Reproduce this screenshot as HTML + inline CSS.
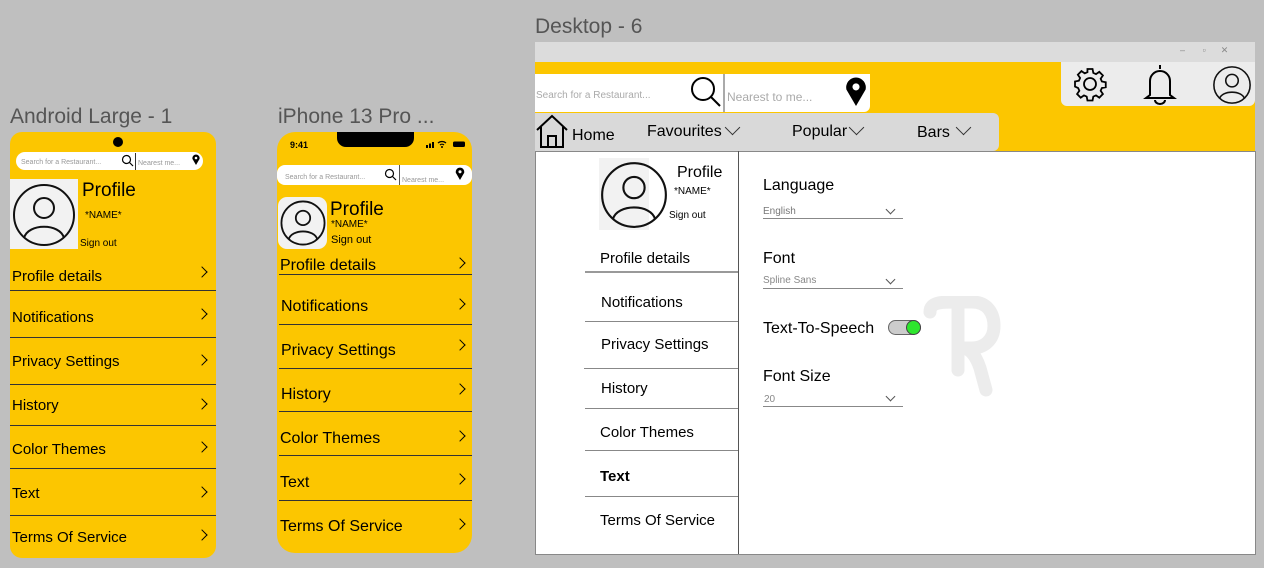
<!DOCTYPE html>
<html><head><meta charset="utf-8"><style>
*{margin:0;padding:0;box-sizing:border-box}
body{width:1264px;height:568px;background:#bfbfbf;position:relative;overflow:hidden;font-family:"Liberation Sans",sans-serif;color:#000}
.a{position:absolute;white-space:nowrap}
.y{background:#fcc600}
.t{color:#555;font-size:21px}
.ln{position:absolute;height:1px;background:#333}
.chev{position:absolute;width:8px;height:8px;border-right:1.3px solid #000;border-top:1.3px solid #000;transform:rotate(45deg)}
.dd{position:absolute;width:7px;height:7px;border-right:1px solid #555;border-bottom:1px solid #555;transform:rotate(45deg)}
.it{position:absolute;font-size:15px;margin-top:2px}
.ph{font-size:8px;color:#999}
</style></head><body>

<div class="a t" style="left:10px;top:105px">Android Large - 1</div>
<div class="a t" style="left:278px;top:105px">iPhone 13 Pro ...</div>
<div class="a t" style="left:535px;top:15px">Desktop - 6</div>

<!-- Android -->
<div class="a y" style="left:10px;top:132px;width:206px;height:426px;border-radius:12px"></div>
<div class="a" style="left:113px;top:137px;width:10px;height:10px;border-radius:50%;background:#000"></div>
<div class="a" style="left:16px;top:152px;width:187px;height:18px;background:#fff;border-radius:9px"></div>
<div class="a ph" style="left:21px;top:159px;font-size:7px">Search for a Restaurant...</div>
<svg class="a" style="left:121px;top:154px" width="13" height="13" viewBox="0 0 13 13"><circle cx="5.5" cy="5.5" r="4" fill="none" stroke="#000" stroke-width="1.2"/><path d="M8.5 8.5L12 12" stroke="#000" stroke-width="1.2"/></svg>
<div class="a" style="left:135px;top:153px;width:1px;height:17px;background:#333"></div>
<div class="a ph" style="left:138px;top:160px;font-size:7px">Nearest me...</div>
<svg class="a" style="left:192px;top:154px" width="8" height="11" viewBox="0 0 8 11"><path d="M4 11L0.5 5A3.6 3.6 0 1 1 7.5 5Z" fill="#000"/><circle cx="4" cy="4" r="1.3" fill="#fff"/></svg>
<div class="a" style="left:10px;top:179px;width:68px;height:70px;background:#f2f2f2"></div>
<svg class="a" style="left:12px;top:183px" width="64" height="64" viewBox="0 0 64 64"><circle cx="32" cy="32" r="30" fill="none" stroke="#111" stroke-width="2"/><circle cx="32" cy="25" r="10" fill="none" stroke="#111" stroke-width="2"/><path d="M12 55C16 40 48 40 52 55" fill="none" stroke="#111" stroke-width="2"/></svg>
<div class="a" style="left:82px;top:180px;font-size:19px">Profile</div>
<div class="a" style="left:85px;top:210px;font-size:10px">*NAME*</div>
<div class="a" style="left:80px;top:238px;font-size:10px">Sign out</div>
<div class="it" style="left:12px;top:266px">Profile details</div><div class="chev" style="left:198px;top:268px"></div><div class="ln" style="left:10px;top:290px;width:206px"></div>
<div class="it" style="left:12px;top:307px">Notifications</div><div class="chev" style="left:198px;top:310px"></div><div class="ln" style="left:10px;top:337px;width:206px"></div>
<div class="it" style="left:12px;top:351px">Privacy Settings</div><div class="chev" style="left:198px;top:356px"></div><div class="ln" style="left:10px;top:384px;width:206px"></div>
<div class="it" style="left:12px;top:395px">History</div><div class="chev" style="left:198px;top:400px"></div><div class="ln" style="left:10px;top:425px;width:206px"></div>
<div class="it" style="left:12px;top:439px">Color Themes</div><div class="chev" style="left:198px;top:443px"></div><div class="ln" style="left:10px;top:468px;width:206px"></div>
<div class="it" style="left:12px;top:483px">Text</div><div class="chev" style="left:198px;top:488px"></div><div class="ln" style="left:10px;top:515px;width:206px"></div>
<div class="it" style="left:12px;top:527px">Terms Of Service</div><div class="chev" style="left:198px;top:531px"></div>

<!-- iPhone -->
<div class="a y" style="left:277px;top:132px;width:195px;height:421px;border-radius:18px"></div>
<div class="a" style="left:337px;top:132px;width:77px;height:15px;background:#000;border-radius:0 0 9px 9px"></div>
<div class="a" style="left:290px;top:140px;font-size:9px;font-weight:bold">9:41</div>
<svg class="a" style="left:426px;top:140px" width="40" height="8" viewBox="0 0 40 8"><rect x="0" y="5" width="2" height="3"/><rect x="3" y="3.5" width="2" height="4.5"/><rect x="6" y="2" width="2" height="6"/><path d="M12 3a6 6 0 0 1 8 0M14 5a3 3 0 0 1 4 0" fill="none" stroke="#000" stroke-width="1.3"/><circle cx="16" cy="7" r="1"/><rect x="27" y="1.5" width="12" height="5.5" rx="1.5"/></svg>
<div class="a" style="left:277px;top:165px;width:195px;height:20px;background:#fff;border-radius:8px"></div>
<div class="a ph" style="left:285px;top:174px;font-size:7px">Search for a Restaurant...</div>
<svg class="a" style="left:384px;top:168px" width="13" height="13" viewBox="0 0 13 13"><circle cx="5.5" cy="5.5" r="4" fill="none" stroke="#000" stroke-width="1.2"/><path d="M8.5 8.5L12 12" stroke="#000" stroke-width="1.2"/></svg>
<div class="a" style="left:399px;top:165px;width:1px;height:20px;background:#555"></div>
<div class="a ph" style="left:402px;top:177px;font-size:7px">Nearest me...</div>
<svg class="a" style="left:455px;top:167px" width="10" height="13" viewBox="0 0 8 11"><path d="M4 11L0.5 5A3.6 3.6 0 1 1 7.5 5Z" fill="#000"/><circle cx="4" cy="4" r="1.3" fill="#fff"/></svg>
<div class="a" style="left:278px;top:197px;width:49px;height:52px;background:#f2f2f2;border-radius:9px"></div>
<svg class="a" style="left:280px;top:200px" width="46" height="46" viewBox="0 0 64 64"><circle cx="32" cy="32" r="30" fill="none" stroke="#111" stroke-width="2.5"/><circle cx="32" cy="25" r="10" fill="none" stroke="#111" stroke-width="2.5"/><path d="M12 55C16 40 48 40 52 55" fill="none" stroke="#111" stroke-width="2.5"/></svg>
<div class="a" style="left:330px;top:199px;font-size:19px">Profile</div>
<div class="a" style="left:331px;top:219px;font-size:10px">*NAME*</div>
<div class="a" style="left:331px;top:234px;font-size:11px">Sign out</div>
<div class="it" style="left:280px;top:255px;font-size:16px">Profile details</div><div class="chev" style="left:456px;top:259px"></div><div class="ln" style="left:279px;top:274px;width:193px"></div>
<div class="it" style="left:281px;top:296px;font-size:16px">Notifications</div><div class="chev" style="left:456px;top:300px"></div><div class="ln" style="left:279px;top:324px;width:193px"></div>
<div class="it" style="left:281px;top:340px;font-size:16px">Privacy Settings</div><div class="chev" style="left:456px;top:341px"></div><div class="ln" style="left:279px;top:368px;width:193px"></div>
<div class="it" style="left:281px;top:384px;font-size:16px">History</div><div class="chev" style="left:456px;top:385px"></div><div class="ln" style="left:279px;top:411px;width:193px"></div>
<div class="it" style="left:280px;top:428px;font-size:16px">Color Themes</div><div class="chev" style="left:456px;top:432px"></div><div class="ln" style="left:279px;top:455px;width:193px"></div>
<div class="it" style="left:280px;top:472px;font-size:16px">Text</div><div class="chev" style="left:456px;top:475px"></div><div class="ln" style="left:279px;top:500px;width:193px"></div>
<div class="it" style="left:280px;top:516px;font-size:16px">Terms Of Service</div><div class="chev" style="left:456px;top:520px"></div>

<!-- Desktop -->
<div class="a" style="left:535px;top:42px;width:720px;height:20px;background:#dcdcdc"></div>
<div class="a" style="left:1180px;top:45px;font-size:9px;color:#888">–&nbsp;&nbsp;&nbsp;&nbsp;&nbsp;&nbsp;&nbsp;▫&nbsp;&nbsp;&nbsp;&nbsp;&nbsp;&nbsp;✕</div>
<div class="a y" style="left:535px;top:62px;width:720px;height:90px"></div>
<div class="a" style="left:535px;top:74px;width:335px;height:38px;background:#fff;border-radius:0 0 6px 0"></div>
<div class="a ph" style="left:536px;top:90px;font-size:10px;color:#aaa">Search for a Restaurant...</div>
<svg class="a" style="left:688px;top:74px" width="34" height="34" viewBox="0 0 34 34"><circle cx="15" cy="15" r="11" fill="none" stroke="#000" stroke-width="2"/><path d="M23 23L32 32" stroke="#000" stroke-width="2"/></svg>
<div class="a" style="left:723px;top:74px;width:2px;height:38px;background:#aaa"></div>
<div class="a" style="left:727px;top:90px;font-size:12px;color:#aaa">Nearest to me...</div>
<svg class="a" style="left:845px;top:76px" width="22" height="30" viewBox="0 0 8 11"><path d="M4 11L0.5 5A3.6 3.6 0 1 1 7.5 5Z" fill="#000"/><circle cx="4" cy="4" r="1.3" fill="#fff"/></svg>
<div class="a" style="left:1061px;top:62px;width:194px;height:44px;background:#ececec;border-radius:0 0 6px 6px"></div>
<svg class="a" style="left:1072px;top:66px" width="36" height="36" viewBox="0 0 24 24"><path d="M12 8a4 4 0 1 0 0 8 4 4 0 0 0 0-8zM10.3 2h3.4l.5 2.6 1.8.8 2.2-1.5 2.4 2.4-1.5 2.2.8 1.8 2.6.5v3.4l-2.6.5-.8 1.8 1.5 2.2-2.4 2.4-2.2-1.5-1.8.8-.5 2.6h-3.4l-.5-2.6-1.8-.8-2.2 1.5-2.4-2.4 1.5-2.2-.8-1.8L2 13.7v-3.4l2.6-.5.8-1.8-1.5-2.2 2.4-2.4 2.2 1.5 1.8-.8z" fill="none" stroke="#000" stroke-width="1.2"/></svg>
<svg class="a" style="left:1142px;top:63px" width="36" height="42" viewBox="0 0 36 42"><path d="M18 2v4M8 32V18a10 10 0 0 1 20 0v14l4 3H4z" fill="none" stroke="#000" stroke-width="2"/><path d="M13 37a5 4 0 0 0 10 0" fill="none" stroke="#000" stroke-width="2"/></svg>
<svg class="a" style="left:1212px;top:65px" width="40" height="40" viewBox="0 0 64 64"><circle cx="32" cy="32" r="29" fill="none" stroke="#111" stroke-width="2.5"/><circle cx="32" cy="25" r="10" fill="none" stroke="#111" stroke-width="2.5"/><path d="M12 54C16 40 48 40 52 54" fill="none" stroke="#111" stroke-width="2.5"/></svg>
<div class="a" style="left:535px;top:113px;width:464px;height:38px;background:#d9d9d9;border-radius:0 6px 6px 0"></div>
<svg class="a" style="left:535px;top:113px" width="36" height="36" viewBox="0 0 36 36"><path d="M2 17L17 3 32 17M6 14v20h22V14M13 34V23h8v11" fill="none" stroke="#000" stroke-width="2"/></svg>
<div class="a" style="left:572px;top:127px;font-size:16px">Home</div>
<div class="a" style="left:647px;top:123px;font-size:16px">Favourites</div><div class="dd" style="left:727px;top:122px;width:11px;height:11px;border-color:#333"></div>
<div class="a" style="left:792px;top:123px;font-size:16px">Popular</div><div class="dd" style="left:851px;top:122px;width:11px;height:11px;border-color:#333"></div>
<div class="a" style="left:917px;top:124px;font-size:16px">Bars</div><div class="dd" style="left:958px;top:122px;width:11px;height:11px;border-color:#333"></div>
<div class="a" style="left:535px;top:151px;width:721px;height:404px;background:#fff;border:1px solid #888"></div>
<div class="a" style="left:738px;top:151px;width:1px;height:403px;background:#555"></div>
<div class="a" style="left:599px;top:158px;width:50px;height:72px;background:#f2f2f2"></div>
<svg class="a" style="left:600px;top:161px" width="68" height="68" viewBox="0 0 64 64"><circle cx="32" cy="32" r="30" fill="none" stroke="#111" stroke-width="2"/><circle cx="32" cy="25" r="10" fill="none" stroke="#111" stroke-width="2"/><path d="M12 55C16 40 48 40 52 55" fill="none" stroke="#111" stroke-width="2"/></svg>
<div class="a" style="left:677px;top:164px;font-size:16px">Profile</div>
<div class="a" style="left:674px;top:186px;font-size:10px">*NAME*</div>
<div class="a" style="left:669px;top:210px;font-size:10px">Sign out</div>
<div class="it" style="left:600px;top:248px">Profile details</div><div class="ln" style="left:585px;top:271px;width:153px;background:#999;height:2px"></div>
<div class="it" style="left:601px;top:292px">Notifications</div><div class="ln" style="left:585px;top:321px;width:153px;background:#888"></div>
<div class="it" style="left:601px;top:334px">Privacy Settings</div><div class="ln" style="left:584px;top:368px;width:154px;background:#888"></div>
<div class="it" style="left:601px;top:378px">History</div><div class="ln" style="left:585px;top:408px;width:153px;background:#888"></div>
<div class="it" style="left:600px;top:422px">Color Themes</div><div class="ln" style="left:585px;top:450px;width:153px;background:#888"></div>
<div class="it" style="left:600px;top:466px;font-weight:bold">Text</div><div class="ln" style="left:585px;top:496px;width:153px;background:#888"></div>
<div class="it" style="left:600px;top:510px">Terms Of Service</div>
<svg class="a" style="left:922px;top:296px" width="86" height="104" viewBox="0 0 86 104"><path d="M8 16C8 6 20 6 32 6H50C66 6 72 18 72 30C72 44 62 52 50 52H40M36 10V74M40 52C48 52 54 60 58 72L64 94" fill="none" stroke="#ececec" stroke-width="13" stroke-linecap="round"/></svg>
<div class="a" style="left:763px;top:177px;font-size:16px">Language</div>
<div class="a" style="left:763px;top:206px;font-size:10px;color:#777">English</div><div class="dd" style="left:887px;top:206px"></div><div class="ln" style="left:763px;top:218px;width:140px;background:#888"></div>
<div class="a" style="left:763px;top:250px;font-size:16px">Font</div>
<div class="a" style="left:763px;top:275px;font-size:10px;color:#888">Spline Sans</div><div class="dd" style="left:887px;top:276px"></div><div class="ln" style="left:763px;top:288px;width:140px;background:#888"></div>
<div class="a" style="left:763px;top:320px;font-size:16px">Text-To-Speech</div>
<div class="a" style="left:888px;top:320px;width:33px;height:15px;border-radius:8px;background:#ccc;border:1px solid #666"></div>
<div class="a" style="left:906px;top:320px;width:15px;height:15px;border-radius:50%;background:#2ee62e;border:1px solid #444"></div>
<div class="a" style="left:763px;top:368px;font-size:16px">Font Size</div>
<div class="a" style="left:764px;top:394px;font-size:10px;color:#888">20</div><div class="dd" style="left:887px;top:393px"></div><div class="ln" style="left:763px;top:406px;width:140px;background:#888"></div>
</body></html>
